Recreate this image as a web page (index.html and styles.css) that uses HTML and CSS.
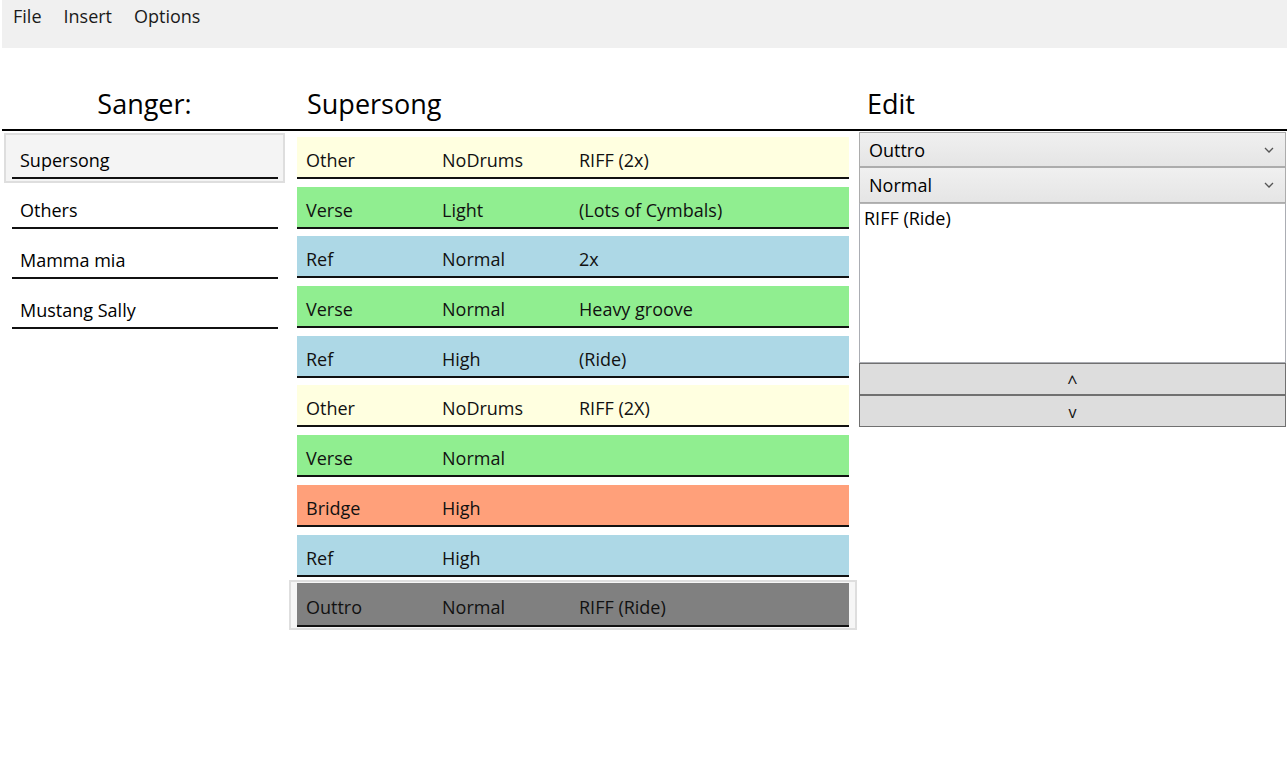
FILE: index.html
```html
<!DOCTYPE html>
<html>
<head>
<meta charset="utf-8">
<link rel="stylesheet" href="styles.css">
</head>
<body>
<div class="app">
  <div class="menubar">
    <span class="menu-item">File</span>
    <span class="menu-item">Insert</span>
    <span class="menu-item">Options</span>
  </div>
  <div class="headers">
    <div class="h-left">Sanger:</div>
    <div class="h-mid">Supersong</div>
    <div class="h-right">Edit</div>
  </div>
  <div class="main">
    <div class="songs">
      <div class="song selected"><div class="song-inner">Supersong</div></div>
      <div class="song"><div class="song-inner">Others</div></div>
      <div class="song"><div class="song-inner">Mamma mia</div></div>
      <div class="song"><div class="song-inner">Mustang Sally</div></div>
    </div>
    <div class="parts">
      <div class="part"><div class="part-inner other"><span>Other</span><span>NoDrums</span><span>RIFF (2x)</span></div></div>
      <div class="part"><div class="part-inner verse"><span>Verse</span><span>Light</span><span>(Lots of Cymbals)</span></div></div>
      <div class="part"><div class="part-inner ref"><span>Ref</span><span>Normal</span><span>2x</span></div></div>
      <div class="part"><div class="part-inner verse"><span>Verse</span><span>Normal</span><span>Heavy groove</span></div></div>
      <div class="part"><div class="part-inner ref"><span>Ref</span><span>High</span><span>(Ride)</span></div></div>
      <div class="part"><div class="part-inner other"><span>Other</span><span>NoDrums</span><span>RIFF (2X)</span></div></div>
      <div class="part"><div class="part-inner verse"><span>Verse</span><span>Normal</span><span></span></div></div>
      <div class="part"><div class="part-inner bridge"><span>Bridge</span><span>High</span><span></span></div></div>
      <div class="part"><div class="part-inner ref"><span>Ref</span><span>High</span><span></span></div></div>
      <div class="part selected"><div class="part-inner outtro"><span>Outtro</span><span>Normal</span><span>RIFF (Ride)</span></div></div>
    </div>
    <div class="edit">
      <div class="combo"><span>Outtro</span><svg class="chev" width="10" height="6" viewBox="0 0 10 6"><path d="M1 1 L5 5 L9 1" fill="none" stroke="#555" stroke-width="1.3"/></svg></div>
      <div class="combo"><span>Normal</span><svg class="chev" width="10" height="6" viewBox="0 0 10 6"><path d="M1 1 L5 5 L9 1" fill="none" stroke="#555" stroke-width="1.3"/></svg></div>
      <div class="textbox">RIFF (Ride)</div>
      <div class="btn"><span class="caret">^</span></div>
      <div class="btn"><span class="vee">v</span></div>
    </div>
  </div>
</div>
</body>
</html>
```
FILE: styles.css
```css
html, body {
  margin: 0;
  padding: 0;
  background: #fff;
}
body {
  font-family: "Open Sans", "Noto Sans", sans-serif;
  font-size: 18px;
  color: #000;
}
.app {
  padding-left: 2px;
  height: 772px;
  box-sizing: border-box;
}
.menubar {
  height: 48px;
  background: #f0f0f0;
  display: flex;
  align-items: flex-start;
  padding-top: 2px;
  box-sizing: border-box;
}
.menu-item {
  padding: 0 11px;
  line-height: 28px;
  color: #1a1a1a;
}
.headers {
  display: grid;
  grid-template-columns: 285px 572px 1fr;
  align-items: end;
  padding-bottom: 7px;
  box-sizing: border-box;
  font-size: 27px;
  line-height: 36px;
  border-bottom: 2px solid #000;
  height: 83px;
}
.h-left { text-align: center; }
.h-mid { padding-left: 20px; }
.h-right { padding-left: 8px; }
.main {
  display: grid;
  grid-template-columns: 285px 572px 1fr;
  align-items: start;
}
.songs {
  padding: 2px 2px 0 2px;
}
.song {
  height: 50px;
  box-sizing: border-box;
  border: 1px solid transparent;
  padding: 3px 6px 3px 7px;
}
.song.selected {
  background: #f4f4f4;
  border: 2px solid #dedede;
  padding: 2px 5px 2px 6px;
}
.song-inner {
  height: 42px;
  box-sizing: border-box;
  border-bottom: 2px solid #111;
  padding: 10px 0 0 8px;
  line-height: 26px;
}
.parts {
  padding: 2px 2px 0 2px;
}
.part {
  height: 49.7px;
  box-sizing: border-box;
  border: 1px solid transparent;
  padding: 3px 7px;
}
.part.selected {
  background: #f6f6f6;
  border: 2px solid #dedede;
  padding: 1px 6px;
  height: 50px;
}
.part-inner {
  height: 42px;
  box-sizing: border-box;
  border-bottom: 2px solid #111;
  padding: 10px 0 0 9px;
  line-height: 26px;
  display: grid;
  grid-template-columns: 136px 137px 1fr;
  color: #111;
}
.part.selected .part-inner {
  height: 44px;
  padding-top: 11px;
}
.other { background: #ffffe0; }
.verse { background: #90ee90; }
.ref { background: #add8e6; }
.bridge { background: #ffa07a; }
.outtro { background: #808080; }
.edit {
  padding-top: 1px;
  display: flex;
  flex-direction: column;
}
.combo {
  height: 35px;
  box-sizing: border-box;
  border: 1px solid #acacac;
  background: linear-gradient(#f0f0f0, #e5e5e5);
  display: flex;
  align-items: center;
  justify-content: space-between;
  padding: 0 11px 0 9px;
  margin-right: 1px;
}
.combo + .combo { height: 36px; }
.chev { display: block; }
.textbox {
  height: 160px;
  box-sizing: border-box;
  border: 1px solid #abadb3;
  border-top-color: #b5b5b5;
  background: #fff;
  padding: 1px 4px;
  line-height: 26px;
  margin-right: 1px;
}
.btn {
  height: 32px;
  box-sizing: border-box;
  border: 1px solid #707070;
  background: #dddddd;
  text-align: center;
  line-height: 30px;
  margin-right: 1px;
  color: #111;
}
.caret {
  font-size: 18px;
  vertical-align: -3px;
}
.vee {
  font-size: 16px;
}
```
